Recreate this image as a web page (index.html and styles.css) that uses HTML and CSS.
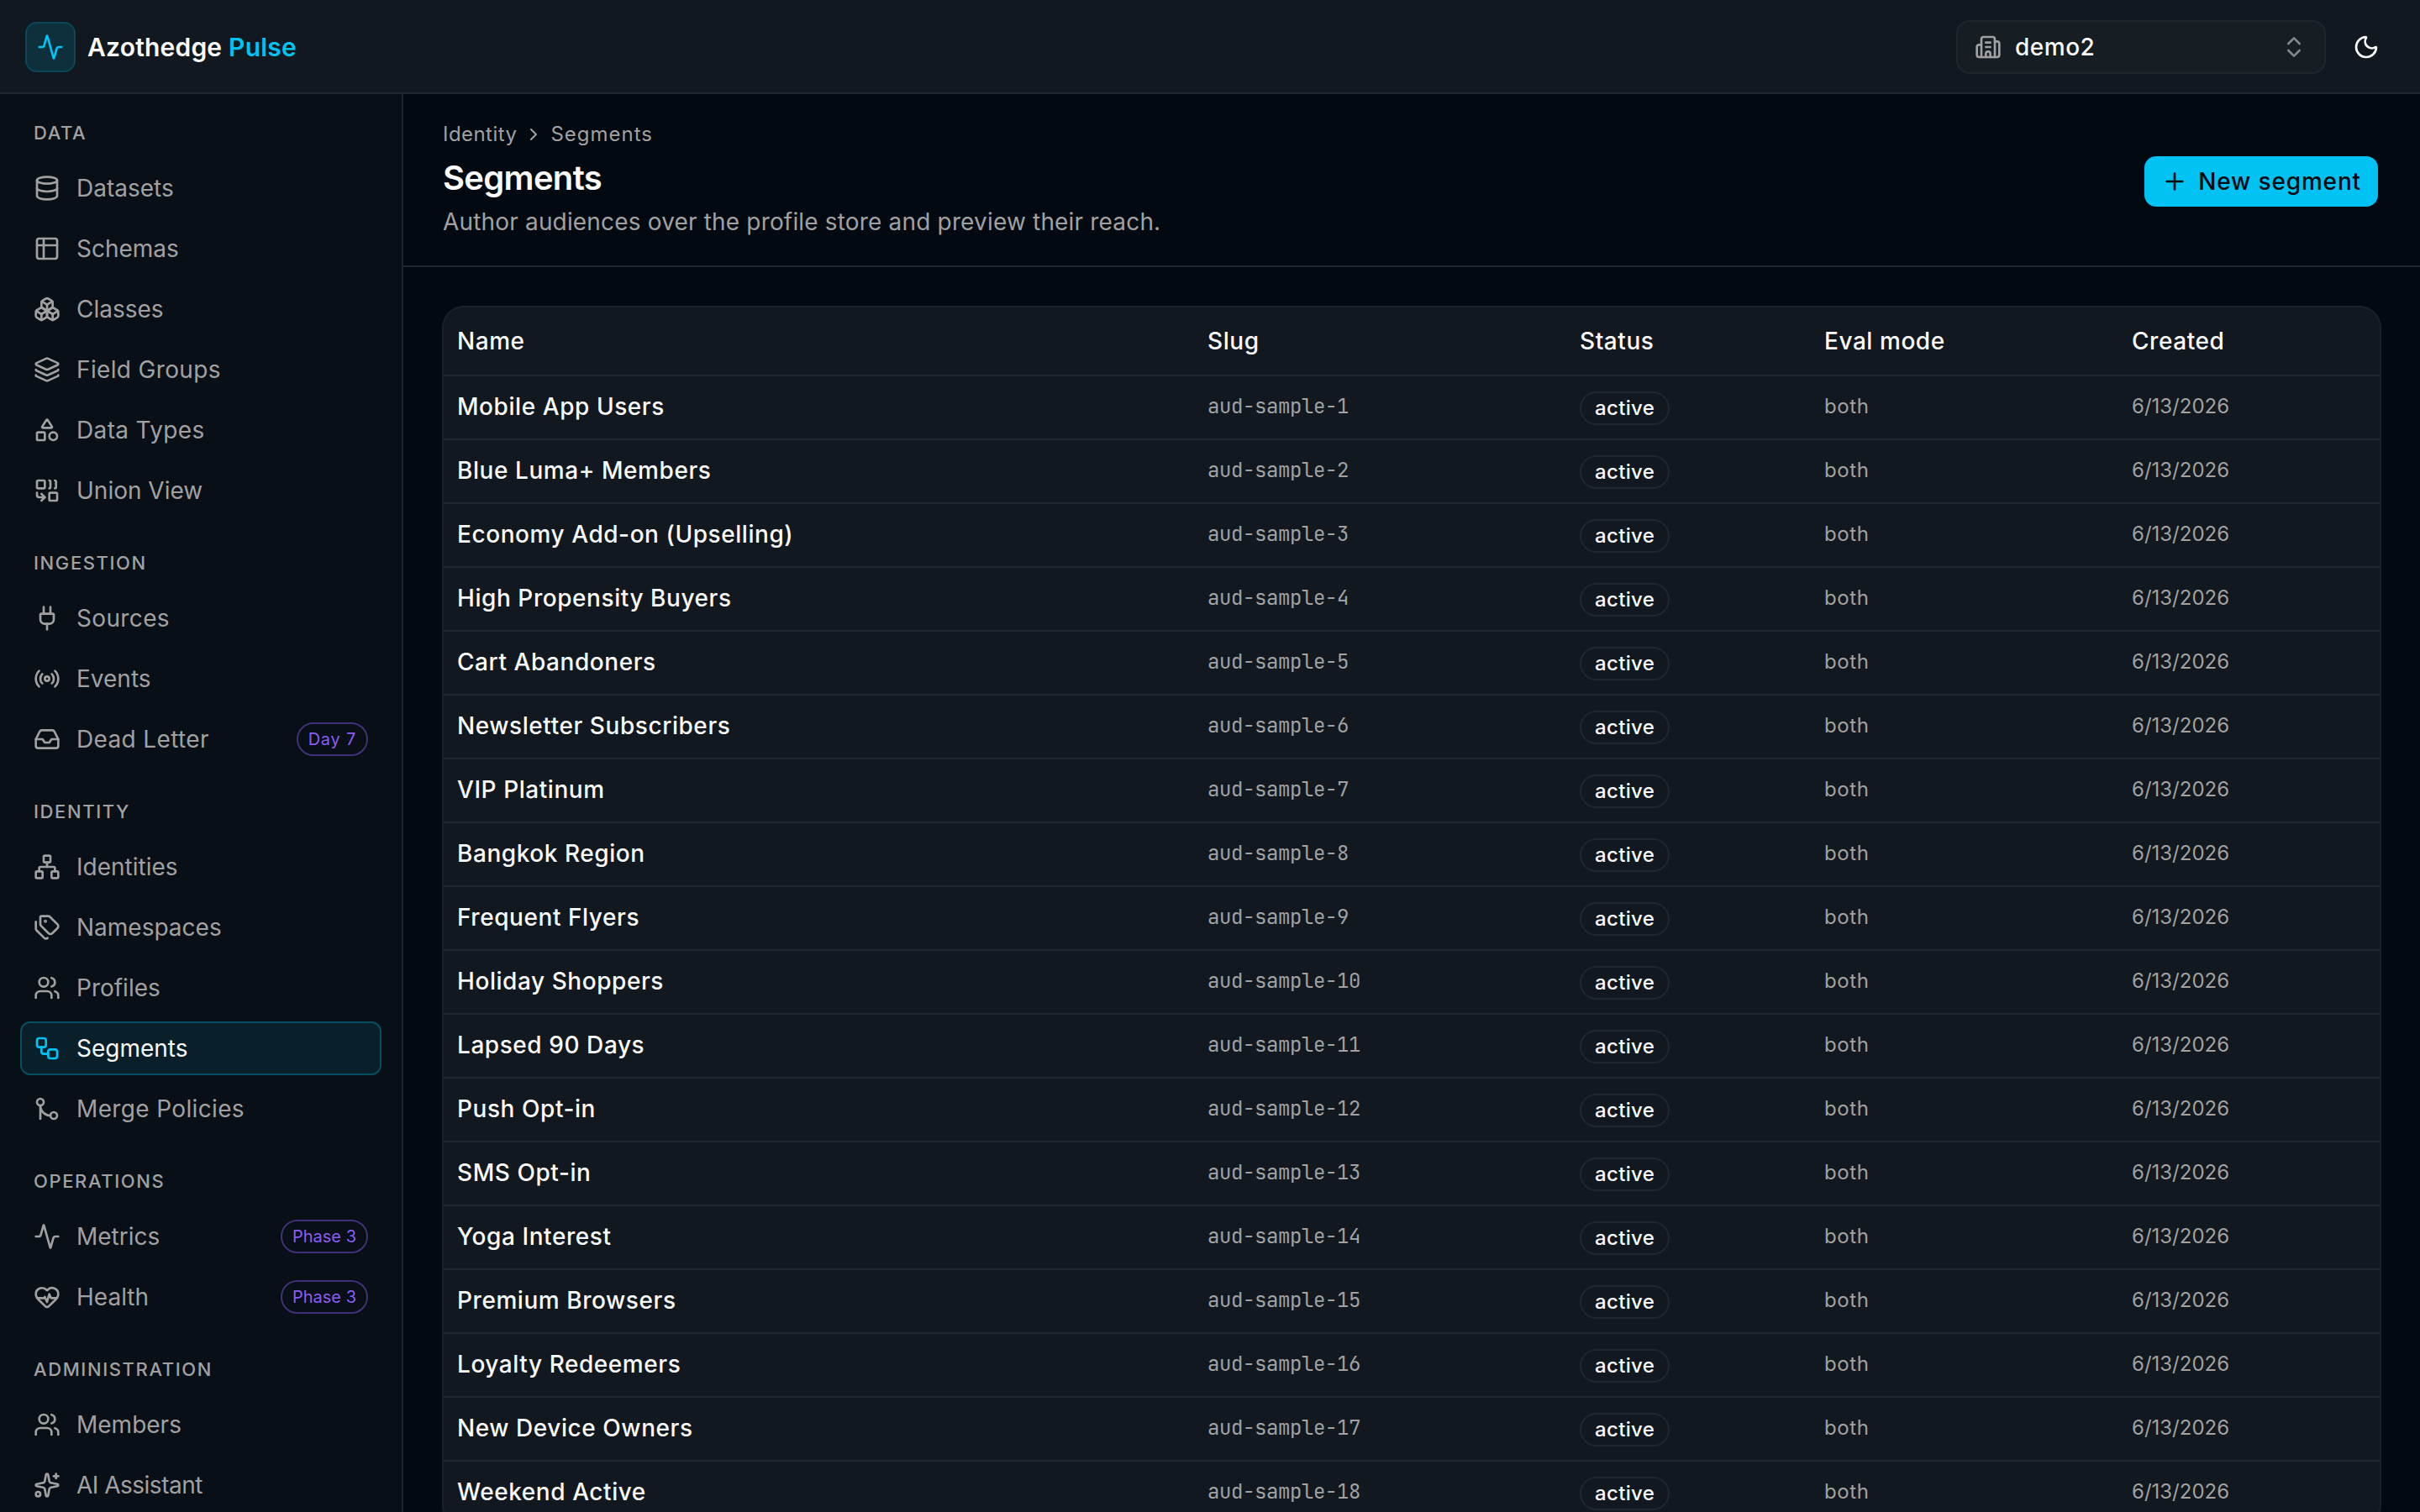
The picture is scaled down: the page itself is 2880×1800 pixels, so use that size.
FILE: index.html
```html
<!DOCTYPE html>
<html lang="en">
<head>
<meta charset="utf-8">
<title>Segments · Azothedge Pulse</title>
<link rel="stylesheet" href="styles.css">
</head>
<body>
<div class="app">
  <header class="topbar">
    <div class="brand">
      <span class="brand-mark"><svg class="icon" viewBox="0 0 24 24"><path d="M22 12h-2.48a2 2 0 0 0-1.93 1.46l-2.35 8.36a.25.25 0 0 1-.48 0L9.24 2.18a.25.25 0 0 0-.48 0l-2.35 8.36A2 2 0 0 1 4.49 12H2"/></svg></span>
      <span class="brand-name">Azothedge <em>Pulse</em></span>
    </div>
    <div class="tools">
      <div class="select">
        <svg class="icon muted" viewBox="0 0 24 24"><path d="M10 12h4"/><path d="M10 8h4"/><path d="M14 21v-3a2 2 0 0 0-4 0v3"/><path d="M6 10H4a2 2 0 0 0-2 2v7a2 2 0 0 0 2 2h16a2 2 0 0 0 2-2V9a2 2 0 0 0-2-2h-2"/><path d="M6 21V5a2 2 0 0 1 2-2h8a2 2 0 0 1 2 2v16"/></svg>
        <span class="select-value">demo2</span>
        <svg class="icon dim" viewBox="0 0 24 24"><path d="m7 15 5 5 5-5"/><path d="m7 9 5-5 5 5"/></svg>
      </div>
      <button class="icon-button" aria-label="Theme"><svg class="icon" viewBox="0 0 24 24"><path d="M20.985 12.486a9 9 0 1 1-9.473-9.472c.405-.022.617.46.402.803a6 6 0 0 0 8.268 8.268c.344-.215.825-.004.803.401"/></svg></button>
    </div>
  </header>
  <div class="shell">
    <nav class="sidebar">
      <section class="group">
        <h2>Data</h2>
        <a class="item"><svg class="icon" viewBox="0 0 24 24"><ellipse cx="12" cy="5" rx="9" ry="3"/><path d="M3 5V19A9 3 0 0 0 21 19V5"/><path d="M3 12A9 3 0 0 0 21 12"/></svg><span>Datasets</span></a>
        <a class="item"><svg class="icon" viewBox="0 0 24 24"><rect width="18" height="18" x="3" y="3" rx="2"/><path d="M3 9h18"/><path d="M9 3v18"/></svg><span>Schemas</span></a>
        <a class="item"><svg class="icon" viewBox="0 0 24 24"><path d="M2.97 12.92A2 2 0 0 0 2 14.63v3.24a2 2 0 0 0 .97 1.71l3 1.8a2 2 0 0 0 2.06 0L12 19v-5.5l-5-3-4.03 2.42Z"/><path d="m7 16.5-4.74-2.85"/><path d="m7 16.5 5-3"/><path d="M7 16.5v5.17"/><path d="M12 13.5V19l3.97 2.38a2 2 0 0 0 2.06 0l3-1.8a2 2 0 0 0 .97-1.71v-3.24a2 2 0 0 0-.97-1.71L17 10.5l-5 3Z"/><path d="m17 16.5-5-3"/><path d="m17 16.5 4.74-2.85"/><path d="M17 16.5v5.17"/><path d="M7.97 4.42A2 2 0 0 0 7 6.13v4.37l5 3 5-3V6.13a2 2 0 0 0-.97-1.71l-3-1.8a2 2 0 0 0-2.06 0l-3 1.8Z"/><path d="M12 8 7.26 5.15"/><path d="m12 8 4.74-2.85"/><path d="M12 13.5V8"/></svg><span>Classes</span></a>
        <a class="item loose"><svg class="icon" viewBox="0 0 24 24"><path d="M12.83 2.18a2 2 0 0 0-1.66 0L2.6 6.08a1 1 0 0 0 0 1.83l8.58 3.91a2 2 0 0 0 1.66 0l8.58-3.9a1 1 0 0 0 0-1.83z"/><path d="M2 12a1 1 0 0 0 .58.91l8.6 3.91a2 2 0 0 0 1.65 0l8.58-3.9A1 1 0 0 0 22 12"/><path d="M2 17a1 1 0 0 0 .58.91l8.6 3.91a2 2 0 0 0 1.65 0l8.58-3.9A1 1 0 0 0 22 17"/></svg><span>Field Groups</span></a>
        <a class="item loose"><svg class="icon" viewBox="0 0 24 24"><path d="M8.3 10a.7.7 0 0 1-.626-1.079L11.4 3a.7.7 0 0 1 1.198-.043L16.3 8.9a.7.7 0 0 1-.572 1.1Z"/><rect x="3" y="14" width="7" height="7" rx="1"/><circle cx="17.5" cy="17.5" r="3.5"/></svg><span>Data Types</span></a>
        <a class="item"><svg class="icon" viewBox="0 0 24 24"><path d="M14 3a1 1 0 0 1 1 1v5a1 1 0 0 1-1 1"/><path d="M19 3a1 1 0 0 1 1 1v5a1 1 0 0 1-1 1"/><path d="m7 15 3 3"/><path d="m7 21 3-3H5a2 2 0 0 1-2-2v-2"/><rect x="14" y="14" width="7" height="7" rx="1"/><rect x="3" y="3" width="7" height="7" rx="1"/></svg><span>Union View</span></a>
      </section>
      <section class="group">
        <h2>Ingestion</h2>
        <a class="item loose"><svg class="icon" viewBox="0 0 24 24"><path d="M12 22v-5"/><path d="M15 8V2"/><path d="M17 8a1 1 0 0 1 1 1v4a4 4 0 0 1-4 4h-4a4 4 0 0 1-4-4V9a1 1 0 0 1 1-1z"/><path d="M9 8V2"/></svg><span>Sources</span></a>
        <a class="item"><svg class="icon" viewBox="0 0 24 24"><path d="M16.247 7.761a6 6 0 0 1 0 8.478"/><path d="M19.075 4.933a10 10 0 0 1 0 14.134"/><path d="M4.925 19.067a10 10 0 0 1 0-14.134"/><path d="M7.753 16.239a6 6 0 0 1 0-8.478"/><circle cx="12" cy="12" r="2"/></svg><span>Events</span></a>
        <a class="item loose"><svg class="icon" viewBox="0 0 24 24"><path d="M22 12h-6l-2 3h-4l-2-3H2"/><path d="M5.45 5.11 2 12v6a2 2 0 0 0 2 2h16a2 2 0 0 0 2-2v-6l-3.45-6.89A2 2 0 0 0 16.76 4H7.24a2 2 0 0 0-1.79 1.11z"/></svg><span>Dead Letter</span><b class="tag tag-day">Day 7</b></a>
      </section>
      <section class="group">
        <h2>Identity</h2>
        <a class="item"><svg class="icon" viewBox="0 0 24 24"><rect x="16" y="16" width="6" height="6" rx="1"/><rect x="2" y="16" width="6" height="6" rx="1"/><rect x="9" y="2" width="6" height="6" rx="1"/><path d="M5 16v-3a1 1 0 0 1 1-1h12a1 1 0 0 1 1 1v3"/><path d="M12 12V8"/></svg><span>Identities</span></a>
        <a class="item"><svg class="icon" viewBox="0 0 24 24"><path d="M13.172 2a2 2 0 0 1 1.414.586l6.71 6.71a2.4 2.4 0 0 1 0 3.408l-4.592 4.592a2.4 2.4 0 0 1-3.408 0l-6.71-6.71A2 2 0 0 1 6 9.172V3a1 1 0 0 1 1-1z"/><path d="M2 7v6.172a2 2 0 0 0 .586 1.414l6.71 6.71a2.4 2.4 0 0 0 3.191.193"/><circle cx="10.5" cy="6.5" r=".5" fill="currentColor"/></svg><span>Namespaces</span></a>
        <a class="item"><svg class="icon" viewBox="0 0 24 24"><path d="M16 21v-2a4 4 0 0 0-4-4H6a4 4 0 0 0-4 4v2"/><path d="M16 3.128a4 4 0 0 1 0 7.744"/><path d="M22 21v-2a4 4 0 0 0-3-3.87"/><circle cx="9" cy="7" r="4"/></svg><span>Profiles</span></a>
        <a class="item active"><svg class="icon" viewBox="0 0 24 24"><rect width="8" height="8" x="3" y="3" rx="2"/><path d="M7 11v4a2 2 0 0 0 2 2h4"/><rect width="8" height="8" x="13" y="13" rx="2"/></svg><span>Segments</span></a>
        <a class="item loose"><svg class="icon" viewBox="0 0 24 24"><circle cx="18" cy="18" r="3"/><circle cx="6" cy="6" r="3"/><path d="M6 21V9a9 9 0 0 0 9 9"/></svg><span>Merge Policies</span></a>
      </section>
      <section class="group">
        <h2>Operations</h2>
        <a class="item"><svg class="icon" viewBox="0 0 24 24"><path d="M22 12h-2.48a2 2 0 0 0-1.93 1.46l-2.35 8.36a.25.25 0 0 1-.48 0L9.24 2.18a.25.25 0 0 0-.48 0l-2.35 8.36A2 2 0 0 1 4.49 12H2"/></svg><span>Metrics</span><b class="tag">Phase 3</b></a>
        <a class="item"><svg class="icon" viewBox="0 0 24 24"><path d="M2 9.5a5.5 5.5 0 0 1 9.591-3.676.56.56 0 0 0 .818 0A5.49 5.49 0 0 1 22 9.5c0 2.29-1.5 4-3 5.5l-5.492 5.313a2 2 0 0 1-3 .019L5 15c-1.5-1.5-3-3.2-3-5.5"/><path d="M3.22 13H9.5l.5-1 2 4.5 2-7 1.5 3.5h5.27"/></svg><span>Health</span><b class="tag">Phase 3</b></a>
      </section>
      <section class="group">
        <h2>Administration</h2>
        <a class="item"><svg class="icon" viewBox="0 0 24 24"><path d="M16 21v-2a4 4 0 0 0-4-4H6a4 4 0 0 0-4 4v2"/><path d="M16 3.128a4 4 0 0 1 0 7.744"/><path d="M22 21v-2a4 4 0 0 0-3-3.87"/><circle cx="9" cy="7" r="4"/></svg><span>Members</span></a>
        <a class="item snug"><svg class="icon" viewBox="0 0 24 24"><path d="M11.017 2.814a1 1 0 0 1 1.966 0l1.051 5.558a2 2 0 0 0 1.594 1.594l5.558 1.051a1 1 0 0 1 0 1.966l-5.558 1.051a2 2 0 0 0-1.594 1.594l-1.051 5.558a1 1 0 0 1-1.966 0l-1.051-5.558a2 2 0 0 0-1.594-1.594l-5.558-1.051a1 1 0 0 1 0-1.966l5.558-1.051a2 2 0 0 0 1.594-1.594z"/><path d="M20 2v4"/><path d="M22 4h-4"/><circle cx="4" cy="20" r="2"/></svg><span>AI Assistant</span></a>
      </section>
    </nav>
    <main class="main">
      <div class="page-head">
        <div class="headings">
          <div class="crumbs"><span>Identity</span><svg class="icon small" viewBox="0 0 24 24"><path d="m9 18 6-6-6-6"/></svg><span class="crumb-current">Segments</span></div>
          <h1>Segments</h1>
          <p>Author audiences over the profile store and preview their reach.</p>
        </div>
        <button class="primary"><svg class="icon" viewBox="0 0 24 24"><path d="M5 12h14"/><path d="M12 5v14"/></svg>New segment</button>
      </div>
      <div class="content">
        <div class="card">
          <table>
            <colgroup><col class="c-name"><col class="c-slug"><col class="c-status"><col class="c-mode"><col class="c-created"></colgroup>
            <thead><tr><th>Name</th><th>Slug</th><th>Status</th><th>Eval mode</th><th>Created</th></tr></thead>
            <tbody>
              <tr><td>Mobile App Users</td><td>aud-sample-1</td><td><span class="badge">active</span></td><td>both</td><td>6/13/2026</td></tr>
              <tr><td>Blue Luma+ Members</td><td>aud-sample-2</td><td><span class="badge">active</span></td><td>both</td><td>6/13/2026</td></tr>
              <tr><td>Economy Add-on (Upselling)</td><td>aud-sample-3</td><td><span class="badge">active</span></td><td>both</td><td>6/13/2026</td></tr>
              <tr><td>High Propensity Buyers</td><td>aud-sample-4</td><td><span class="badge">active</span></td><td>both</td><td>6/13/2026</td></tr>
              <tr><td>Cart Abandoners</td><td>aud-sample-5</td><td><span class="badge">active</span></td><td>both</td><td>6/13/2026</td></tr>
              <tr><td>Newsletter Subscribers</td><td>aud-sample-6</td><td><span class="badge">active</span></td><td>both</td><td>6/13/2026</td></tr>
              <tr><td>VIP Platinum</td><td>aud-sample-7</td><td><span class="badge">active</span></td><td>both</td><td>6/13/2026</td></tr>
              <tr><td>Bangkok Region</td><td>aud-sample-8</td><td><span class="badge">active</span></td><td>both</td><td>6/13/2026</td></tr>
              <tr><td>Frequent Flyers</td><td>aud-sample-9</td><td><span class="badge">active</span></td><td>both</td><td>6/13/2026</td></tr>
              <tr><td>Holiday Shoppers</td><td>aud-sample-10</td><td><span class="badge">active</span></td><td>both</td><td>6/13/2026</td></tr>
              <tr><td>Lapsed 90 Days</td><td>aud-sample-11</td><td><span class="badge">active</span></td><td>both</td><td>6/13/2026</td></tr>
              <tr><td>Push Opt-in</td><td>aud-sample-12</td><td><span class="badge">active</span></td><td>both</td><td>6/13/2026</td></tr>
              <tr><td>SMS Opt-in</td><td>aud-sample-13</td><td><span class="badge">active</span></td><td>both</td><td>6/13/2026</td></tr>
              <tr><td>Yoga Interest</td><td>aud-sample-14</td><td><span class="badge">active</span></td><td>both</td><td>6/13/2026</td></tr>
              <tr><td>Premium Browsers</td><td>aud-sample-15</td><td><span class="badge">active</span></td><td>both</td><td>6/13/2026</td></tr>
              <tr><td>Loyalty Redeemers</td><td>aud-sample-16</td><td><span class="badge">active</span></td><td>both</td><td>6/13/2026</td></tr>
              <tr><td>New Device Owners</td><td>aud-sample-17</td><td><span class="badge">active</span></td><td>both</td><td>6/13/2026</td></tr>
              <tr><td>Weekend Active</td><td>aud-sample-18</td><td><span class="badge">active</span></td><td>both</td><td>6/13/2026</td></tr>
            </tbody>
          </table>
        </div>
      </div>
    </main>
  </div>
</div>
</body>
</html>
```
FILE: styles.css
```css
:root {
  --bg: #020910;
  --side: #080f16;
  --panel: #11181f;
  --line: #1f262f;
  --fg: #fafafa;
  --muted: #a1a1a1;
  --accent: #00c2f3;
  --violet: #8b5cf6;
}
* { box-sizing: border-box; }
html { background: var(--bg); }
body { margin: 0; }

.app {
  width: 2880px;
  height: 1800px;
  display: flex;
  flex-direction: column;
  overflow: hidden;
  background: var(--bg);
  color: var(--fg);
  font: 28px/40px Inter, "Liberation Sans", sans-serif;
}
h1, h2, p { margin: 0; }
button { font: inherit; color: inherit; border: 0; background: none; padding: 0; }
.icon {
  width: 32px;
  height: 32px;
  flex: none;
  fill: none;
  stroke: currentColor;
  stroke-width: 2;
  stroke-linecap: round;
  stroke-linejoin: round;
}
.icon.small { width: 24px; height: 24px; }
.muted { color: var(--muted); }
.dim { color: #83868a; }

.topbar {
  flex: none;
  height: 112px;
  display: flex;
  align-items: center;
  justify-content: space-between;
  padding: 2px 32px 0;
  background: var(--panel);
  border-bottom: 2px solid var(--line);
}
.brand { display: flex; align-items: center; gap: 16px; }
.brand-mark {
  display: grid;
  place-items: center;
  width: 56px;
  height: 56px;
  border-radius: 12px;
  color: var(--accent);
  background: #0e2f3c;
  box-shadow: 0 0 0 2px #0c4759;
}
.brand-name { font-size: 30px; font-weight: 600; letter-spacing: 0.2px; }
.brand-name em { font-style: normal; color: var(--accent); }
.tools { display: flex; align-items: center; gap: 16px; }
.select {
  width: 440px;
  height: 64px;
  display: flex;
  align-items: center;
  gap: 16px;
  padding: 0 20px;
  border: 2px solid var(--line);
  border-radius: 16px;
  background: #161d23;
  font-weight: 500;
  letter-spacing: 0.5px;
}
.select-value { flex: 1; }
.icon-button { width: 64px; height: 64px; display: grid; place-items: center; }

.shell { flex: 1; display: flex; min-height: 0; }
.sidebar {
  flex: none;
  width: 480px;
  overflow: hidden;
  padding: 24px;
  border-right: 2px solid var(--line);
  background: var(--side);
}
.group { display: flex; flex-direction: column; gap: 8px; }
.group + .group { margin-top: 32px; }
.group h2 {
  height: 48px;
  padding: 6px 16px;
  font-size: 22px;
  line-height: 32px;
  font-weight: 500;
  letter-spacing: 1.6px;
  text-transform: uppercase;
  color: var(--muted);
}
.item {
  height: 64px;
  display: flex;
  flex: none;
  align-items: center;
  gap: 19px;
  padding: 0 16px;
  border-radius: 12px;
  color: var(--muted);
}
.item span { flex: 1; }
.item.loose span { letter-spacing: 0.35px; }
.item.snug span { letter-spacing: -0.5px; }
.item.active { color: var(--fg); background: #09202b; box-shadow: inset 0 0 0 2px #064e63; }
.item.active .icon { color: var(--accent); }
.tag {
  height: 40px;
  padding: 0 12px;
  border: 2px solid #40307a;
  border-radius: 20px;
  font-size: 20px;
  line-height: 37px;
  font-weight: 400;
  color: var(--violet);
}
.tag-day { letter-spacing: 0.75px; }

.main { flex: 1; min-width: 0; display: flex; flex-direction: column; }
.page-head {
  flex: none;
  height: 206px;
  display: flex;
  align-items: center;
  justify-content: space-between;
  padding: 0 48px 0 47px;
  border-bottom: 2px solid var(--line);
}
.crumbs {
  display: flex;
  align-items: center;
  gap: 8px;
  font-size: 24px;
  line-height: 32px;
  letter-spacing: 0.45px;
  color: var(--muted);
}
.crumb-current { letter-spacing: 1px; }
h1 {
  margin-top: 8px;
  font-size: 40px;
  line-height: 56px;
  font-weight: 600;
  letter-spacing: -0.7px;
}
.headings p { margin-top: 4px; color: var(--muted); letter-spacing: 0.17px; }
.primary {
  height: 64px;
  margin-top: 4px;
  display: flex;
  align-items: center;
  gap: 12px;
  padding: 0 20px;
  border: 2px solid transparent;
  border-radius: 16px;
  background: var(--accent) padding-box;
  color: #020910;
  font-weight: 500;
  letter-spacing: 0.85px;
}
.content { padding: 48px; }
.card {
  overflow: hidden;
  border-radius: 24px;
  background: var(--panel);
  box-shadow: 0 0 0 2px #1b2128;
}
table { width: 100%; table-layout: fixed; border-collapse: separate; border-spacing: 0; }
.c-name { width: 893px; }
.c-slug { width: 443px; }
.c-status { width: 291px; }
.c-mode { width: 366px; }
th, td { padding: 0 16px; text-align: left; border-bottom: 2px solid var(--line); white-space: nowrap; }
th { height: 82px; font-weight: 500; letter-spacing: 0.55px; }
td { height: 76px; padding-bottom: 2px; color: var(--muted); font-size: 24px; line-height: 32px; vertical-align: middle; }
td:nth-child(1) { font-size: 28px; line-height: 40px; font-weight: 500; letter-spacing: 0.56px; color: var(--fg); }
td:nth-child(2) { font-family: "JetBrains Mono", "DejaVu Sans Mono", monospace; letter-spacing: -0.4px; }
td:nth-child(4) { letter-spacing: 0.6px; }
.badge {
  display: block;
  width: fit-content;
  height: 40px;
  margin-top: 4px;
  padding: 0 16px;
  border: 2px solid var(--line);
  border-radius: 20px;
  line-height: 36px;
  font-weight: 500;
  letter-spacing: 0.35px;
  color: var(--fg);
}
```
